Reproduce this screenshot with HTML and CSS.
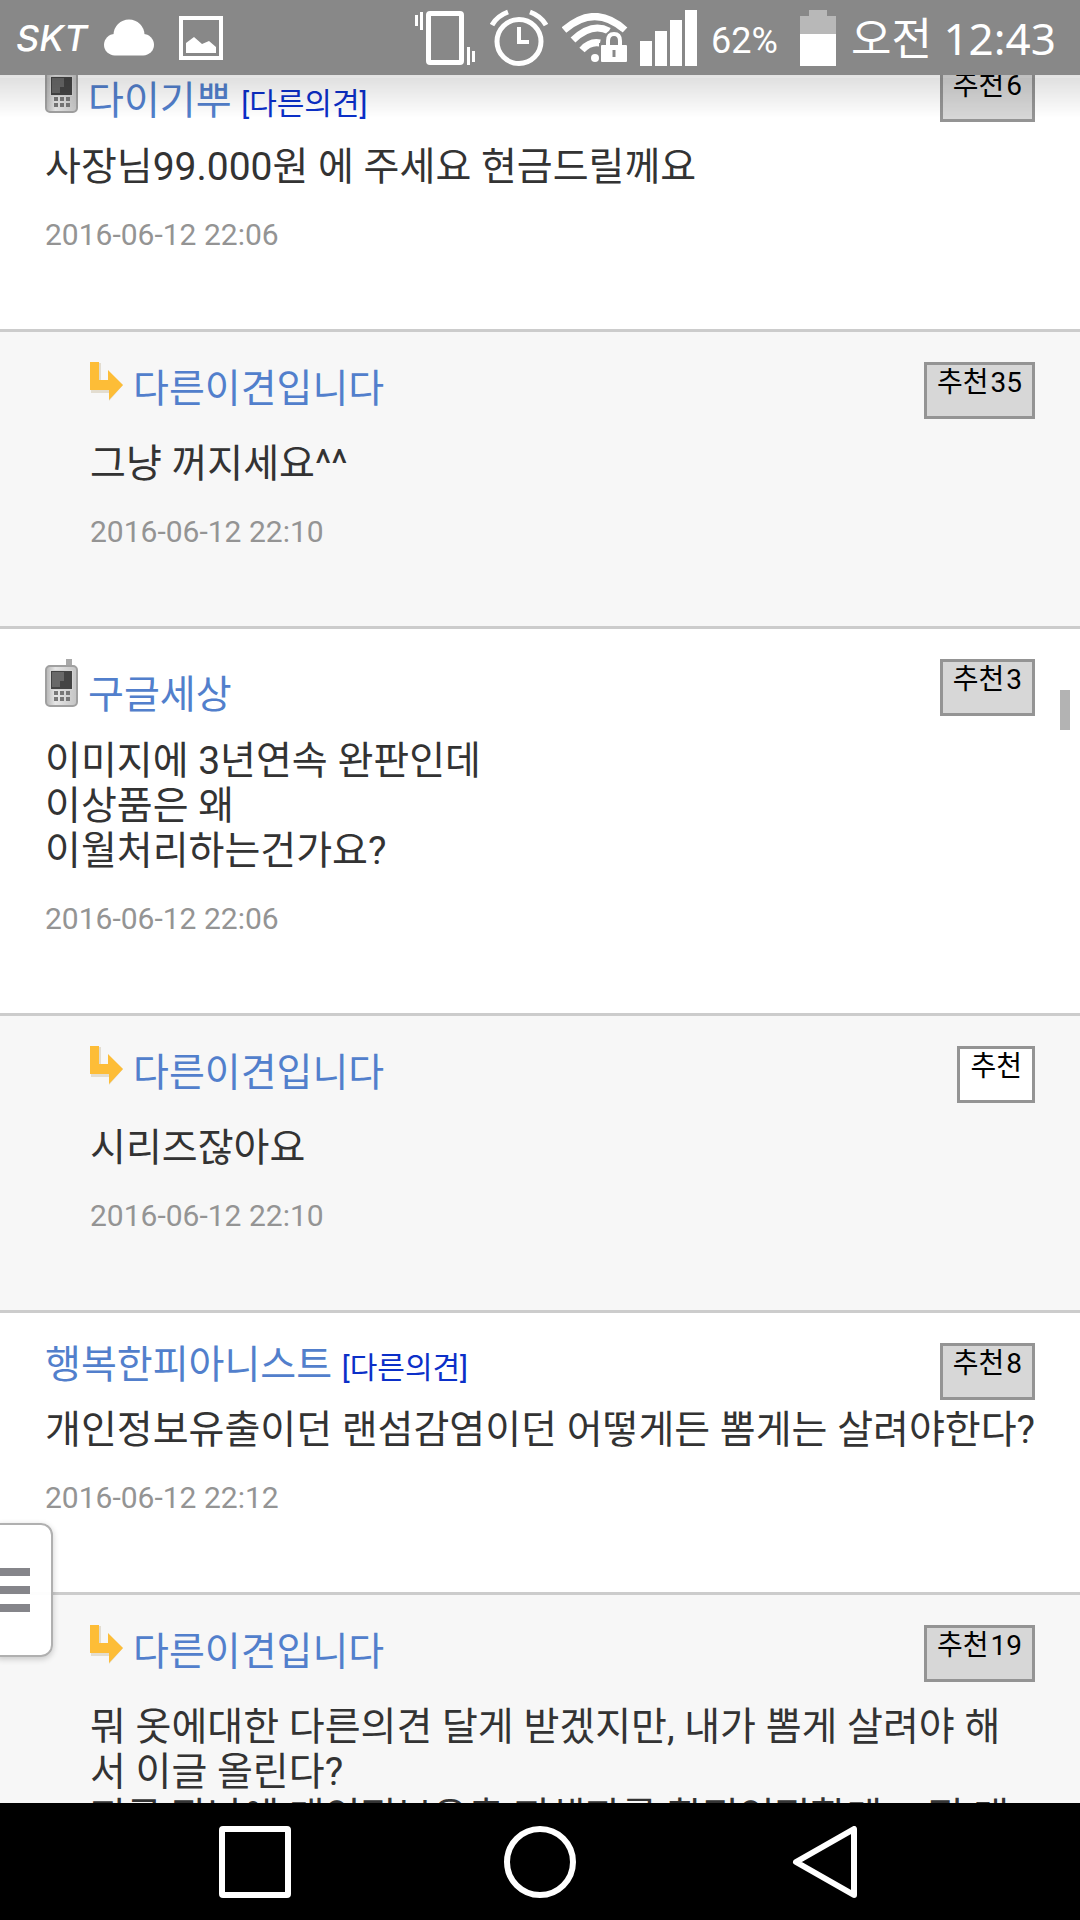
FILE: index.html
```html
<!DOCTYPE html>
<html lang="ko">
<head>
<meta charset="utf-8">
<meta name="viewport" content="width=device-width">
<title>다른의견</title>
<link rel="stylesheet" href="styles.css">
</head>
<body>
<svg width="0" height="0" class="defs" aria-hidden="true">
  <defs>
    <linearGradient id="shell" x1="0" y1="0" x2="1" y2="0">
      <stop offset="0" stop-color="#b5b5b5"/><stop offset="0.3" stop-color="#e6e6e6"/><stop offset="1" stop-color="#c4c4c4"/>
    </linearGradient>
  </defs>
  <symbol id="phone" viewBox="0 0 33 48">
    <rect x="21" y="0" width="6" height="9" fill="#a9a9a9"/>
    <rect x="1" y="7" width="31" height="40" rx="4" fill="url(#shell)" stroke="#a0a0a0" stroke-width="2"/>
    <rect x="5" y="11" width="23" height="20" fill="#d4d4d4"/>
    <rect x="6" y="12" width="21" height="18" fill="#444"/>
    <path d="M7 13h12v9h-4v6H7z" fill="#686868"/>
    <path d="M9 32h4v4H9zM15 32h4v4h-4zM21 32h4v4h-4zM9 38h4v4H9zM15 38h4v4h-4zM21 38h4v4h-4z" fill="#777"/>
  </symbol>
  <symbol id="reply" viewBox="0 0 33 39">
    <path d="M1 1h10v17h8V10l14 13-14 16V31H1z" fill="#e3ddd0"/>
    <path d="M0 0h9v18h9V8l15 15-14 15V28H0z" fill="#fdbd37"/>
  </symbol>
</svg>

<header class="status">
  <span class="carrier">SKT</span>
  <svg class="cloud" width="50" height="37" viewBox="0 0 50 37" fill="#fff"><circle cx="25" cy="16" r="15.500"/><rect y="15" width="50" height="21.500" rx="10.700"/></svg>
  <svg class="photo" width="44" height="44" viewBox="0 0 44 44"><rect x="2" y="2" width="40" height="40" fill="none" stroke="#fff" stroke-width="4"/><path d="M7 37V27l8-6 8 7 7-3 7 6v6z" fill="#fff"/></svg>
  <svg class="vibrate" width="60" height="54" viewBox="0 0 60 54" fill="#fff"><rect x="13.500" y="2.500" width="33" height="49" rx="1.500" fill="none" stroke="#fff" stroke-width="5"/><path d="M0 4h3v11H0zM5 1h3v18H5zM52 36h3v18h-3zM57 40h3v11h-3z"/></svg>
  <svg class="alarm" width="58" height="57" viewBox="0 0 58 57" fill="none" stroke="#fff" stroke-width="5"><circle cx="29" cy="32.500" r="22"/><path d="M29 18v15h10" stroke-width="4"/><path d="M2 16Q7 7 18 3M40 3q11 4 16 13"/></svg>
  <svg class="wifi" width="66" height="50" viewBox="0 0 66 50" fill="none" stroke="#fff" stroke-width="7"><path d="M2 17Q33-10 63 17"/><path d="M11 27q19-18 36-9"/><path d="M20 37q8-9 18-7"/><circle cx="33" cy="45" r="4" fill="#fff" stroke="none"/><path d="M46 32v-4q0-7 7-7t6 7v4" stroke="#888" stroke-width="8"/><rect x="37" y="30" width="29" height="19" fill="#888" stroke="none"/><rect x="39" y="32" width="26" height="17" rx="1" fill="#fff" stroke="none"/><path d="M46 32v-4q0-7 6-7t6 7v4" stroke-width="4"/><path d="M52 37v7" stroke="#888" stroke-width="3"/></svg>
  <svg class="signal" width="57" height="56" viewBox="0 0 57 56" fill="#fff"><path d="M0 31h12v25H0zM15 21h12v35H15zM30 10h12v46H30zM45 0h12v56H45z"/></svg>
  <span class="percent">62%</span>
  <svg class="battery" width="36" height="56" viewBox="0 0 36 56"><path d="M9 0h18v6h9v18H0V6h9z" fill="#b8b8b8"/><path d="M0 24h36v32H0z" fill="#fff"/></svg>
  <span class="clock">오전 12:43</span>
</header>

<main class="view">
  <div class="comments">
    <article class="comment">
      <div class="head">
        <svg class="phone" width="33" height="48"><use href="#phone"/></svg>
        <span class="who low"><a class="name" href="#">다이기뿌</a> <a class="other" href="#">[다른의견]</a></span>
        <button class="vote voted">추천<span class="count">6</span></button>
      </div>
      <p class="text">사장님99.000원 에 주세요 현금드릴께요</p>
      <time class="date">2016-06-12 22:06</time>
    </article>
    <article class="comment reply">
      <div class="head">
        <svg class="arrow" width="33" height="39"><use href="#reply"/></svg>
        <span class="who mid"><a class="name" href="#">다른이견입니다</a></span>
        <button class="vote voted">추천<span class="count">35</span></button>
      </div>
      <p class="text">그냥 꺼지세요^^</p>
      <time class="date">2016-06-12 22:10</time>
    </article>
    <article class="comment">
      <div class="head">
        <svg class="phone" width="33" height="48"><use href="#phone"/></svg>
        <span class="who low"><a class="name" href="#">구글세상</a></span>
        <button class="vote voted">추천<span class="count">3</span></button>
      </div>
      <p class="text">이미지에 3년연속 완판인데<br>이상품은 왜<br>이월처리하는건가요?</p>
      <time class="date">2016-06-12 22:06</time>
    </article>
    <article class="comment reply">
      <div class="head">
        <svg class="arrow" width="33" height="39"><use href="#reply"/></svg>
        <span class="who mid"><a class="name" href="#">다른이견입니다</a></span>
        <button class="vote">추천</button>
      </div>
      <p class="text">시리즈잖아요</p>
      <time class="date">2016-06-12 22:10</time>
    </article>
    <article class="comment">
      <div class="head plain">
        <span class="who"><a class="name" href="#">행복한피아니스트</a> <a class="other" href="#">[다른의견]</a></span>
        <button class="vote voted">추천<span class="count">8</span></button>
      </div>
      <p class="text">개인정보유출이던 랜섬감염이던 어떻게든 뽐게는 살려야한다?</p>
      <time class="date">2016-06-12 22:12</time>
    </article>
    <article class="comment reply">
      <div class="head">
        <svg class="arrow" width="33" height="39"><use href="#reply"/></svg>
        <span class="who mid"><a class="name" href="#">다른이견입니다</a></span>
        <button class="vote voted">추천<span class="count">19</span></button>
      </div>
      <p class="text">뭐 옷에대한 다른의견 달게 받겠지만, 내가 뽐게 살려야 해서 이글 올린다?<br>지금 장난에 개인정보유출 피해자를 확정인정할게ㅡ 정 대</p>
    </article>
  </div>
  <div class="thumb"></div>
  <button class="drawer" aria-label="메뉴"><span></span><span></span><span></span></button>
</main>

<nav class="keys">
  <button aria-label="최근 앱"><svg width="72" height="72" viewBox="0 0 72 72"><rect x="3" y="3" width="66" height="66" rx="1"/></svg></button>
  <button aria-label="홈"><svg width="72" height="72" viewBox="0 0 72 72"><circle cx="36" cy="36" r="33"/></svg></button>
  <button aria-label="뒤로"><svg width="72" height="72" viewBox="0 0 72 72"><path d="M65 3v66L7 36z"/></svg></button>
</nav>
</body>
</html>
```
FILE: styles.css
```css
* { box-sizing: border-box; }

body {
  margin: 0;
  height: 100vh;
  display: flex;
  flex-direction: column;
  overflow: hidden;
  background: #fff;
  font-family: Roboto, "Noto Sans CJK KR", sans-serif;
  color: #333;
}

button {
  margin: 0;
  padding: 0;
  border: 0;
  background: none;
  font-family: inherit;
}

.defs { position: absolute; }

.status {
  flex: none;
  display: flex;
  align-items: center;
  height: 75px;
  padding: 0 22px 0 16px;
  background: #888;
  color: #fff;
}
.carrier { width: 88px; font: italic 500 36px/44px Inter, sans-serif; }
.photo { margin-left: 25px; }
.vibrate { margin-left: auto; }
.alarm { margin-left: 15px; }
.wifi { margin-left: 14px; }
.signal { margin-left: 12px; }
.percent { margin-left: 14px; width: 76px; font-size: 36px; line-height: 40px; padding-top: 6px; }
.battery { margin-left: 13px; }
.clock { margin-left: 15px; width: 207px; font: 44px/56px "Noto Sans", "Noto Sans CJK KR", sans-serif; white-space: nowrap; }

.view {
  position: relative;
  flex: 1;
  min-height: 0;
  overflow: hidden;
}
.view::before {
  content: "";
  position: absolute;
  inset: 0 0 auto;
  height: 40px;
  border-top: 3px solid rgba(0, 0, 0, 0.1);
  background: linear-gradient(rgba(0, 0, 0, 0.12), rgba(0, 0, 0, 0));
}

/* the list is scrolled part of the way under the status bar */
.comments { margin-top: -43px; }

.comment {
  padding: 30px 45px 72px;
  border-top: 3px solid #ccc;
}
.reply {
  padding-left: 90px;
  background: #f7f7f7;
}
.head {
  display: flex;
  align-items: flex-start;
  height: 60px;
}
.head.plain { height: 45px; }
.phone, .arrow { flex: none; margin-right: 10px; }
.who { flex: 1; font-size: 39px; line-height: 45px; }
.who.low { padding-top: 14px; }
.who.mid { padding-top: 5px; }
.name { color: #527fcc; text-decoration: none; }
.other { font-size: 30px; color: #0b2fc8; text-decoration: none; }

.vote {
  flex: none;
  height: 57px;
  padding: 0 10px 15px;
  border: 3px solid #949494;
  background: #fff;
  color: #000;
  font-size: 28px;
  line-height: 36px;
}
.voted { background: #d7d7d7; }
.count { margin-left: 2px; }

.text {
  margin: 20px 0 23px;
  font-size: 39px;
  line-height: 45px;
  word-break: break-all;
}
.date {
  display: block;
  font-size: 30px;
  line-height: 44px;
  color: #949494;
}

.thumb {
  position: absolute;
  top: 615px;
  right: 10px;
  width: 10px;
  height: 40px;
  background: #b3b3b3;
}
.drawer {
  position: absolute;
  left: -3px;
  bottom: 146px;
  display: flex;
  flex-direction: column;
  justify-content: center;
  gap: 10px;
  width: 56px;
  height: 134px;
  border: 2px solid #b0b0b0;
  border-radius: 0 12px 12px 0;
  background: rgba(255, 255, 255, 0.95);
  box-shadow: 0 2px 6px rgba(0, 0, 0, 0.2);
}
.drawer span { width: 31px; height: 8px; background: #85858a; }

.keys {
  flex: none;
  display: flex;
  justify-content: center;
  gap: 213px;
  height: 117px;
  padding-top: 23px;
  background: #000;
}
.keys button { height: 72px; }
.keys svg {
  display: block;
  fill: none;
  stroke: #fff;
  stroke-width: 6;
  stroke-linejoin: round;
}
```
